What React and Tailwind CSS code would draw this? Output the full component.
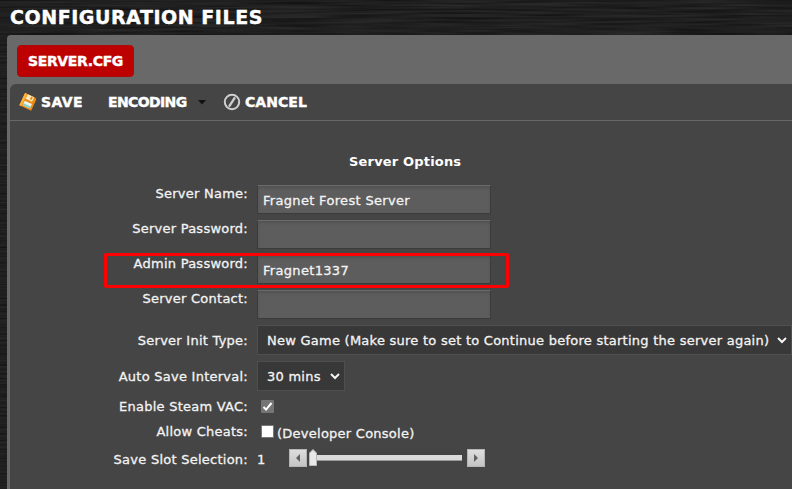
import React from "react";

const titleFont = "font-['DejaVu_Sans'] font-bold whitespace-nowrap leading-none [-webkit-text-stroke:0.400px_#fff]";

function BrushedMetal() {
  return (
    <svg className="absolute inset-0 h-full w-full" aria-hidden="true">
      <filter id="brushed" x="0" y="0" width="100%" height="100%" colorInterpolationFilters="sRGB">
        <feTurbulence type="fractalNoise" baseFrequency="0.012 0.45" numOctaves="2" seed="9" />
        <feColorMatrix values="0.14 0 0 0 0.052  0.14 0 0 0 0.052  0.14 0 0 0 0.052  0 0 0 0 1" />
      </filter>
      <rect width="100%" height="100%" filter="url(#brushed)" />
    </svg>
  );
}

function SaveIcon() {
  return (
    <svg width="18" height="18" viewBox="0 0 18 18">
      <g transform="rotate(25 9 9)">
        <path d="M2.500 2h11.500l1.500 1.500V15.500h-13z" fill="#e98a12" />
        <path d="M2.500 2h2.300v13.500H2.500z" fill="#ffb43c" />
        <path d="M5.500 2h7v5h-7z" fill="#fbe9bd" />
        <path d="M9.500 2.600h1.800v3H9.500z" fill="#e98a12" />
        <path d="M5.500 9.200h8v5h-8z" fill="#e8f5ee" />
        <path d="M5.500 12h8v2.200h-8z" fill="#8fd0c4" />
      </g>
    </svg>
  );
}

function CancelIcon() {
  return (
    <svg width="18" height="18" viewBox="0 0 18 18" fill="none">
      <circle cx="9" cy="9" r="7.200" stroke="#cfcfcf" strokeWidth="2" />
      <path d="M12 4.300L6 13.700" stroke="#cfcfcf" strokeWidth="2.300" />
    </svg>
  );
}

function Chevron() {
  return (
    <svg width="10" height="7" viewBox="0 0 10 7" fill="none" className="shrink-0">
      <path d="M1 1l4 4 4-4" stroke="#f4f4f4" strokeWidth="2" />
    </svg>
  );
}

function Row({ label, row, labelPad, children }) {
  return (
    <div className={`flex items-start ${row}`}>
      <div className={`flex w-[238px] shrink-0 justify-end ${labelPad}`}>
        <span className="whitespace-nowrap">{label}</span>
      </div>
      <div className="ml-[9px] flex min-w-0 items-start">{children}</div>
    </div>
  );
}

function Field({ value }) {
  return (
    <div className="flex h-[29px] w-[234px] items-center border border-[#3b3b3b] border-t-[#6b6b6b] bg-[#5d5d5d] pt-[2px] pl-[5px] shadow-[inset_0_2px_3px_rgba(0,0,0,0.12)]">
      <span className="whitespace-nowrap tracking-[0.320px]">{value}</span>
    </div>
  );
}

function StepButton({ right }) {
  return (
    <div className="flex h-[18px] w-[18px] items-center justify-center border border-[#b5b5b5] bg-linear-to-b from-[#dedede] to-[#c4c4c4]">
      <svg width="6" height="10" viewBox="0 0 6 10">
        <path d={right ? "M1 1l4 4-4 4z" : "M5 1L1 5l4 4z"} fill="#606060" />
      </svg>
    </div>
  );
}

export default function App() {
  return (
    <div className="relative h-[489px] w-[792px] overflow-hidden bg-[#1c1c1c] font-['DejaVu_Sans','Noto_Sans',sans-serif] text-[13px] leading-[16px] tracking-[0.250px] text-[#f3f3f3] [-webkit-text-stroke:0.300px_#f3f3f3]">
      <BrushedMetal />
      <div className="relative flex h-full flex-col">
        <header className="h-[35px] pt-[8px] pl-[10px]">
          <h1 className={`${titleFont} text-[19px] tracking-[0.550px] text-white`}>CONFIGURATION FILES</h1>
        </header>
        <main className="ml-[7px] flex flex-1 flex-col rounded-tl-[4px] bg-[#696969] pl-[3px]">
          <div className="h-[49px] pt-[10px] pl-[7px]">
            <div className="flex h-[32px] w-[117px] items-center justify-center rounded-[4px] border border-[#a90909] bg-[#bd0000]">
              <span className={`${titleFont} text-[14px] tracking-[-0.350px] text-white`}>SERVER.CFG</span>
            </div>
          </div>
          <section className="flex flex-1 flex-col rounded-tl-[6px] bg-[#454545]">
            <nav className={`${titleFont} flex h-[37px] items-center border-b border-[#686868] text-[14px] text-white`}>
              <div className="ml-[9px] flex w-[89px] items-center gap-[4px]">
                <SaveIcon />
                <span className="tracking-[0.400px]">SAVE</span>
              </div>
              <div className="flex w-[115px] items-center">
                <span className="w-[90px] tracking-[-0.620px]">ENCODING</span>
                <svg width="8" height="5" viewBox="0 0 8 5"><path d="M0 0h8L4 4.500z" fill="#111" /></svg>
              </div>
              <div className="flex items-center gap-[4px]">
                <CancelIcon />
                <span className="tracking-[0.050px]">CANCEL</span>
              </div>
            </nav>
            <h2 className="mt-[33px] ml-[339px] whitespace-nowrap text-[13px] leading-[16px] font-bold tracking-[0.180px] text-white [-webkit-text-stroke:0px]">Server Options</h2>
            <form className="mt-[15px]">
              <Row label="Server Name:" row="h-[35px]" labelPad="pt-[1px]"><Field value="Fragnet Forest Server" /></Row>
              <Row label="Server Password:" row="h-[35px]" labelPad="pt-[1px]"><Field value="" /></Row>
              <Row label="Admin Password:" row="h-[35px]" labelPad="pt-[1px]"><Field value="Fragnet1337" /></Row>
              <Row label="Server Contact:" row="h-[35px]" labelPad="pt-[1px]"><Field value="" /></Row>
              <Row label="Server Init Type:" row="h-[36px]" labelPad="pt-[8px]">
                <div className="flex h-[30px] w-[535px] shrink-0 items-center justify-between border border-[#4f4f4f] bg-[#383838] pt-px pr-[4px] pl-[9px]">
                  <span className="whitespace-nowrap">New Game (Make sure to set to Continue before starting the server again)</span>
                  <Chevron />
                </div>
              </Row>
              <Row label="Auto Save Interval:" row="h-[38px]" labelPad="pt-[8px]">
                <div className="flex h-[30px] w-[88px] items-center justify-between border border-[#4f4f4f] bg-[#383838] pt-px pr-[4px] pl-[9px]">
                  <span className="whitespace-nowrap">30 mins</span>
                  <Chevron />
                </div>
              </Row>
              <Row label="Enable Steam VAC:" row="h-[25px]" labelPad="">
                <div className="mt-px ml-[4px] flex h-[13px] w-[13px] items-center justify-center rounded-[1px] bg-[#757575]">
                  <svg width="11" height="11" viewBox="0 0 11 11" fill="none"><path d="M1.500 6l2.600 2.600L9.500 2" stroke="white" strokeWidth="2" /></svg>
                </div>
              </Row>
              <Row label="Allow Cheats:" row="h-[25px]" labelPad="">
                <div className="mt-px ml-[4px] h-[13px] w-[13px] rounded-[1px] border border-[#777] bg-white" />
                <span className="mt-[2px] ml-[3px] whitespace-nowrap">(Developer Console)</span>
              </Row>
              <Row label="Save Slot Selection:" row="h-[30px]" labelPad="pt-[3px]">
                <span className="mt-[3px] w-[32px]">1</span>
                <div className="flex items-center">
                  <StepButton />
                  <div className="relative ml-[3px] h-[6px] w-[152px] border-b border-[#999] bg-[#dcdcdc]">
                    <svg className="absolute -top-[6px] -left-px" width="8" height="17" viewBox="0 0 8 17">
                      <path d="M.5 4L4 .5 7.500 4v12.500H.5z" fill="#e8e8e8" stroke="#b8b8b8" />
                    </svg>
                  </div>
                  <div className="ml-[5px]"><StepButton right /></div>
                </div>
              </Row>
            </form>
          </section>
        </main>
      </div>
      <div className="absolute top-[253px] left-[104px] h-[35px] w-[405px] rounded-[2px] border-[3px] border-[#fe0000]" />
    </div>
  );
}
